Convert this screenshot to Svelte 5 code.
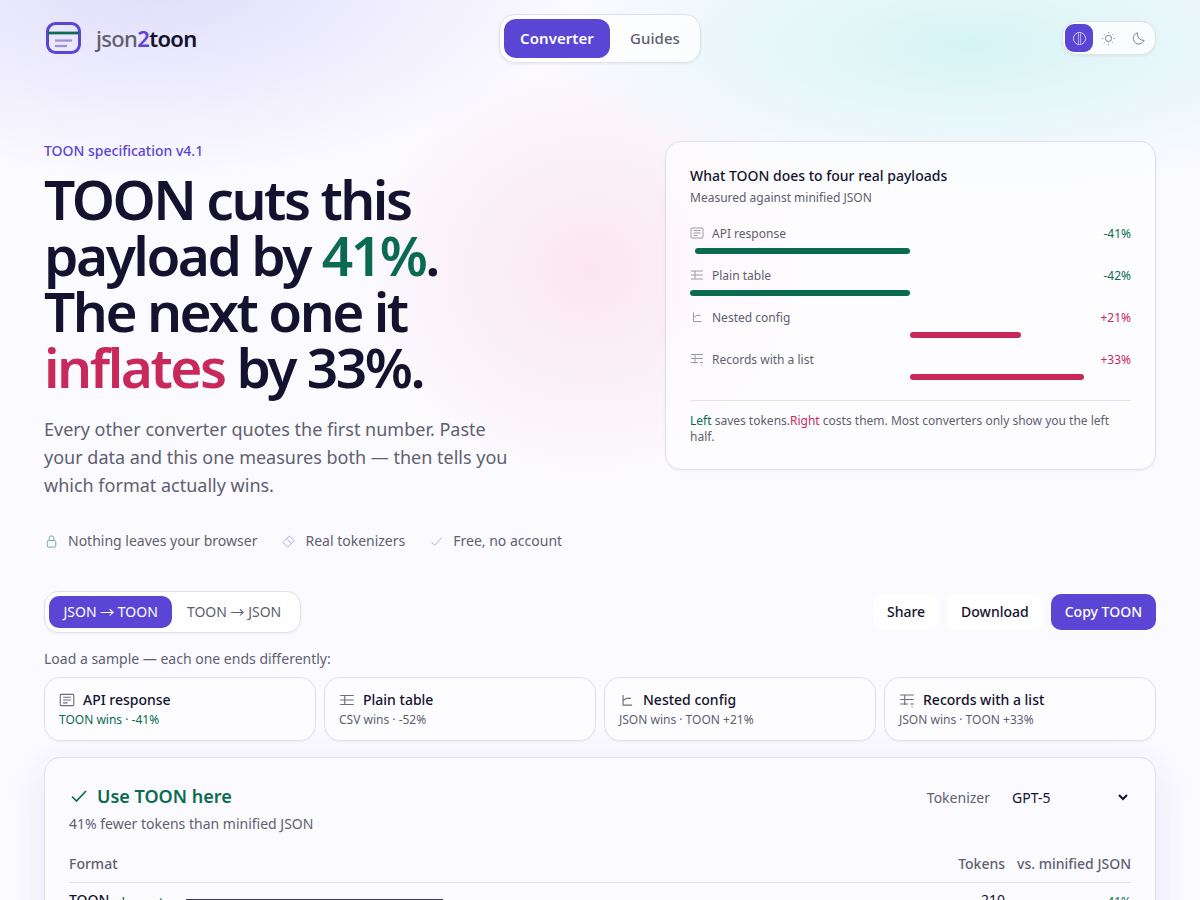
<script>
  const payloads = [
    { name: 'API response', icon: 'doc', delta: -41, sub: 'TOON wins · -41%', win: true },
    { name: 'Plain table', icon: 'table', delta: -42, sub: 'CSV wins · -52%', win: false },
    { name: 'Nested config', icon: 'nest', delta: 21, sub: 'JSON wins · TOON +21%', win: false },
    { name: 'Records with a list', icon: 'rec', delta: 33, sub: 'JSON wins · TOON +33%', win: false }
  ];
  const fmt = (d) => (d > 0 ? '+' : '') + d + '%';
  const barWidth = (d) => (Math.abs(d) / 42) * 100;
</script>

{#snippet icon(kind)}
  <svg class="ico" viewBox="0 0 16 16" fill="none" stroke="currentColor" stroke-width="1">
    {#if kind === 'doc'}
      <rect x="2" y="3" width="12" height="10" rx="1" />
      <path d="M4.500 5.500h7M4.500 8h7M4.500 10.500h4" />
    {:else if kind === 'table'}
      <path d="M2 4h12M2 8h12M2 12h12M6 4v8" />
    {:else if kind === 'nest'}
      <path d="M4.500 3.500v9h8" />
      <path d="M4.500 8.500l3-2h4" />
    {:else}
      <path d="M2 3.500h12M2 7.500h12M2 11.500h7M6 3.500v9M11 11.500h3M12 14h1" />
    {/if}
  </svg>
{/snippet}

<div class="page">
  <header>
    <a class="brand" href="#top">
      <svg class="logo" viewBox="0 0 36 32" fill="none">
        <rect x="1.500" y="1.500" width="32" height="29" rx="8" stroke="#5a45d4" stroke-width="3" />
        <path d="M2 11h31" stroke="#0f6b55" stroke-width="2.800" />
        <path d="M9 18.500h17" stroke="#9a8cea" stroke-width="2.200" />
        <path d="M9 24h12" stroke="#9a8cea" stroke-width="2.200" />
      </svg>
      <span class="word"><span class="w1">json</span><span class="w2">2</span><span class="w3">toon</span></span>
    </a>
    <nav class="pill">
      <button class="on">Converter</button>
      <button>Guides</button>
    </nav>
    <div class="theme">
      <button class="on" aria-label="System">
        <svg viewBox="0 0 16 16" fill="none" stroke="currentColor" stroke-width="1"><circle cx="8" cy="8" r="6.500" /><path d="M6.800 2.500v11M9.200 2.500v11" stroke-width=".8" /></svg>
      </button>
      <button aria-label="Light">
        <svg viewBox="0 0 16 16" fill="none" stroke="currentColor" stroke-width="1"><circle cx="8" cy="8" r="3.300" /><path d="M8 1v1.500M8 13.500V15M1 8h1.500M13.500 8H15M3 3l1 1M12 12l1 1M3 13l1-1M12 4l1-1" stroke-width=".8" /></svg>
      </button>
      <button aria-label="Dark">
        <svg viewBox="0 0 16 16" fill="none" stroke="currentColor" stroke-width="1"><path d="M7 2a6 6 0 1 0 7 8A6.500 6.500 0 0 1 7 2z" /></svg>
      </button>
    </div>
  </header>

  <section class="hero">
    <div class="intro">
      <p class="eyebrow">TOON specification v4.1</p>
      <h1>TOON cuts this payload by <span class="good">41%</span>. The next one it <span class="bad">inflates</span> by 33%.</h1>
      <p class="lede">Every other converter quotes the first number. Paste your data and this one measures both — then tells you which format actually wins.</p>
      <ul class="trust">
        <li>
          <svg class="green" viewBox="0 0 16 16" fill="none" stroke="currentColor"><rect x="3.500" y="7" width="9" height="7" rx="1" /><path d="M5.500 7V4.500a2.500 2.500 0 0 1 5 0V7" /></svg>
          Nothing leaves your browser
        </li>
        <li>
          <svg class="violet" viewBox="0 0 16 16" fill="none" stroke="currentColor"><path d="M9 2l5 5-7 7-5-5zM6.500 5.500l4 4" stroke-width=".9" /></svg>
          Real tokenizers
        </li>
        <li>
          <svg class="violet" viewBox="0 0 16 16" fill="none" stroke="currentColor"><path d="M2.500 8.500l3.500 3.500 7.500-8" stroke-width=".9" /></svg>
          Free, no account
        </li>
      </ul>
    </div>

    <aside class="chart">
      <h2>What TOON does to four real payloads</h2>
      <p class="chart-sub">Measured against minified JSON</p>
      <div class="rows">
        {#each payloads as p}
          <div class="row">
            <div class="row-head">
              {@render icon(p.icon)}
              <span class="row-name">{p.name}</span>
              <span class="row-val" class:good={p.delta < 0} class:bad={p.delta > 0}>{fmt(p.delta)}</span>
            </div>
            <div class="track">
              <div class="half left">
                {#if p.delta < 0}<div class="bar neg" style="width:{barWidth(p.delta)}%"></div>{/if}
              </div>
              <div class="half">
                {#if p.delta > 0}<div class="bar pos" style="width:{barWidth(p.delta)}%"></div>{/if}
              </div>
            </div>
          </div>
        {/each}
      </div>
      <p class="chart-foot"><span class="good">Left</span> saves tokens.<span class="bad">Right</span> costs them. Most converters only show you the left half.</p>
    </aside>
  </section>

  <section class="tools">
    <div class="mode">
      <button class="on">JSON → TOON</button>
      <button>TOON → JSON</button>
    </div>
    <div class="actions">
      <button class="ghost">Share</button>
      <button class="ghost">Download</button>
      <button class="primary">Copy TOON</button>
    </div>
  </section>

  <p class="load">Load a sample — each one ends differently:</p>
  <div class="samples">
    {#each payloads as p}
      <button class="sample">
        <span class="sample-title">{@render icon(p.icon)}{p.name}</span>
        <span class="sample-sub" class:good={p.win}>{p.sub}</span>
      </button>
    {/each}
  </div>

  <section class="result">
    <div class="verdict">
      <div>
        <h3>
          <svg viewBox="0 0 20 20" fill="none" stroke="currentColor" stroke-width="1.700"><path d="M3 10.500l4.500 4.500L17 5" /></svg>
          Use TOON here
        </h3>
        <p class="verdict-sub">41% fewer tokens than minified JSON</p>
      </div>
      <label class="tok">
        Tokenizer
        <select>
          <option>GPT-5</option>
          <option>Claude</option>
        </select>
      </label>
    </div>
    <table>
      <thead>
        <tr><th class="f">Format</th><th class="n">Tokens</th><th class="n">vs. minified JSON</th></tr>
      </thead>
      <tbody>
        <tr>
          <td class="f"><span class="fmt">TOON</span><span class="tag">lowest</span><span class="tbar"></span></td>
          <td class="n">210</td>
          <td class="n pct good">-41%</td>
        </tr>
      </tbody>
    </table>
  </section>
</div>

<style>
  :global(body) {
    margin: 0;
    background: #fbfaff;
    overflow: hidden;
  }
  .page {
    box-sizing: border-box;
    height: 900px;
    overflow: hidden;
    padding: 0 44px;
    font-family: "Noto Sans", sans-serif;
    color: #14122e;
    background:
      radial-gradient(ellipse 420px 150px at 970px 45px, #d6f4f4 0%, rgba(214, 244, 244, 0) 100%),
      radial-gradient(ellipse 430px 200px at 150px -20px, #e0ddfc 0%, rgba(224, 221, 252, 0) 100%),
      radial-gradient(ellipse 230px 210px at 590px 270px, #fbe6ef 0%, rgba(251, 230, 239, 0) 100%),
      #fbfaff;
  }
  button { font-family: inherit; cursor: pointer; }
  h1, h2, h3, p, ul { margin: 0; padding: 0; }
  .good { color: #0b6b50; }
  .bad { color: #c9285a; }

  header {
    height: 76px;
    display: grid;
    grid-template-columns: 1fr auto 1fr;
    align-items: center;
    padding-top: 2px;
    box-sizing: border-box;
    margin-top: -1px;
  }
  .brand {
    display: flex;
    align-items: center;
    gap: 14px;
    padding-left: 2px;
    text-decoration: none;
  }
  .logo { width: 36px; height: 32px; }
  .word { font-size: 22px; font-weight: 500; letter-spacing: -0.03em; }
  .w1 { color: #5f5f70; }
  .w2 { color: #5a45d4; font-weight: 600; }
  .w3 { color: #14122e; font-weight: 600; }

  .pill {
    display: flex;
    gap: 4px;
    padding: 4px;
    background: rgba(255, 255, 255, 0.7);
    border: 1px solid #e2e1ea;
    border-radius: 16px;
    box-shadow: 0 1px 3px rgba(30, 20, 80, 0.08);
  }
  .pill button {
    height: 39px;
    padding: 0 16px;
    border: 0;
    background: none;
    border-radius: 12px;
    font-size: 15px;
    font-weight: 500;
    letter-spacing: 0.005em;
    color: #5f5f70;
  }
  .pill button.on { background: #5a45d4; color: #fff; font-weight: 600; }

  .theme {
    justify-self: end;
    display: flex;
    padding: 2px;
    background: rgba(255, 255, 255, 0.8);
    border: 1px solid #e2e1ea;
    border-radius: 15px;
    box-shadow: 0 1px 3px rgba(30, 20, 80, 0.08);
  }
  .theme button {
    width: 29px;
    height: 28px;
    padding: 0;
    border: 0;
    background: none;
    border-radius: 9px;
    color: #77778a;
    display: grid;
    place-items: center;
  }
  .theme button + button { margin-left: 1px; }
  .theme button.on { background: #5a45d4; color: #ddd8fa; width: 28px; }
  .theme svg { width: 15px; height: 15px; }

  .hero {
    display: grid;
    grid-template-columns: 1fr 491px;
    gap: 24px;
    align-items: start;
    padding-top: 66px;
  }
  .eyebrow { font-size: 14px; line-height: 20px; font-weight: 500; color: #5a45d4; }
  h1 {
    margin-top: 10px;
    width: 440px;
    font-size: 55px;
    line-height: 56px;
    font-weight: 600;
    letter-spacing: -0.045em;
    color: #14122e;
  }
  .lede {
    margin-top: 20px;
    width: 480px;
    font-size: 18px;
    line-height: 28px;
    color: #5f5f70;
  }
  .trust {
    margin-top: 32px;
    display: flex;
    gap: 24px;
    list-style: none;
    font-size: 14px;
    line-height: 20px;
    color: #5f5f70;
  }
  .trust li { display: flex; align-items: center; gap: 9px; }
  .trust svg { width: 15px; height: 15px; }
  .green { color: #6fa897; }
  .violet { color: #a79ce0; }

  .chart {
    box-sizing: border-box;
    height: 329px;
    padding: 24px;
    border: 1px solid #e2e1ea;
    border-radius: 16px;
    background: rgba(255, 255, 255, 0.55);
    box-shadow: 0 1px 3px rgba(30, 20, 80, 0.06);
  }
  .chart h2 { font-size: 14px; line-height: 20px; font-weight: 500; }
  .chart-sub { margin-top: 3px; font-size: 12px; line-height: 18px; color: #5f5f70; }
  .rows { margin-top: 14px; display: flex; flex-direction: column; gap: 4px; }
  .row { height: 38px; }
  .row-head {
    display: flex;
    align-items: center;
    height: 24px;
    font-size: 12px;
    color: #5f5f70;
  }
  .row-head .ico { width: 16px; height: 16px; margin: 0 7px 0 -1px; color: #9a9aa8; }
  .row-name { flex: 1; }
  .track { display: grid; grid-template-columns: 220px 1fr; margin-top: 3px; }
  .half { display: flex; }
  .half.left { justify-content: flex-end; }
  .bar { height: 6px; border-radius: 3px; }
  .bar.neg { background: #0b6b50; }
  .bar.pos { background: #c9285a; }
  .chart-foot {
    margin-top: 15px;
    padding-top: 12px;
    border-top: 1px solid #e2e1ea;
    font-size: 12px;
    line-height: 16px;
    color: #5f5f70;
  }

  .tools {
    margin-top: 40px;
    display: flex;
    align-items: center;
    justify-content: space-between;
  }
  .mode {
    display: flex;
    height: 42px;
    box-sizing: border-box;
    padding: 4px;
    background: rgba(255, 255, 255, 0.7);
    border: 1px solid #e2e1ea;
    border-radius: 14px;
    box-shadow: 0 1px 3px rgba(30, 20, 80, 0.06);
  }
  .mode button {
    height: 32px;
    padding: 0 14.500px 1px;
    border: 0;
    border-radius: 10px;
    background: none;
    font-family: "Noto Sans", "Noto Sans CJK SC", sans-serif;
    font-size: 14px;
    line-height: 20px;
    color: #5f5f70;
  }
  .mode button.on { background: #5a45d4; color: #fff; }
  .actions { display: flex; gap: 8px; }
  .actions button {
    height: 36px;
    padding: 0 14px 1px;
    border: 0;
    border-radius: 10px;
    font-size: 14px;
    font-weight: 500;
  }
  .ghost { background: #fff; color: #14122e; }
  .primary { background: #5a45d4; color: #fff; }

  .load { margin-top: 16px; font-size: 14px; line-height: 20px; color: #5f5f70; }
  .samples {
    margin-top: 8px;
    display: grid;
    grid-template-columns: repeat(4, 1fr);
    gap: 8px;
  }
  .sample {
    box-sizing: border-box;
    height: 64px;
    padding: 0 14px;
    display: flex;
    flex-direction: column;
    justify-content: center;
    align-items: flex-start;
    gap: 2px;
    text-align: left;
    background: rgba(255, 255, 255, 0.6);
    border: 1px solid #e2e1ea;
    border-radius: 16px;
    box-shadow: 0 1px 2px rgba(30, 20, 80, 0.06);
  }
  .sample-title {
    display: flex;
    align-items: center;
    font-size: 14px;
    line-height: 20px;
    font-weight: 500;
    color: #14122e;
  }
  .sample-title .ico { width: 18px; height: 18px; margin: 0 7px 0 -1px; color: #6b6b7c; }
  .sample-sub { font-size: 12px; line-height: 16px; color: #5f5f70; }
  .sample-sub.good { color: #0b6b50; }

  .result {
    margin-top: 16px;
    box-sizing: border-box;
    padding: 24px;
    height: 400px;
    background: #fbfaff;
    border: 1px solid #e2e1ea;
    border-radius: 16px;
    box-shadow: 0 10px 40px rgba(60, 40, 160, 0.1);
  }
  .verdict { display: flex; justify-content: space-between; align-items: flex-start; }
  h3 {
    display: flex;
    align-items: center;
    gap: 8px;
    font-size: 18px;
    line-height: 28px;
    font-weight: 600;
    color: #0b6b50;
  }
  h3 svg { width: 20px; height: 20px; }
  .verdict-sub { font-size: 14px; line-height: 20px; margin-top: 4px; color: #5f5f70; }
  .tok { display: flex; align-items: center; gap: 18px; font-size: 14px; color: #5f5f70; }
  select {
    width: 123px;
    height: 30px;
    border: 0;
    background: transparent;
    font-family: inherit;
    font-size: 14px;
    color: #14122e;
    padding: 0;
  }
  table { margin-top: 11px; width: 100%; border-collapse: collapse; font-size: 14px; }
  th {
    height: 37px;
    padding: 0 0 0 12px;
    font-weight: 500;
    color: #5f5f70;
    border-bottom: 1px solid #e2e1ea;
    text-align: right;
    white-space: nowrap;
  }
  td { padding: 7px 0 0 12px; text-align: right; vertical-align: top; line-height: 20px; }
  td.pct { padding-top: 9px; font-size: 12px; }
  .f { text-align: left; padding-left: 0; width: 100%; }
  .fmt { font-weight: 500; }
  .tag { margin-left: 12px; font-size: 14px; color: #0b6b50; vertical-align: -3px; }
  .tbar {
    display: inline-block;
    margin: 9px 0 0 22px;
    width: 257px;
    height: 10px;
    vertical-align: top;
    background: #5a45d4;
    border-top: 1px solid #3e3a66;
  }
</style>
